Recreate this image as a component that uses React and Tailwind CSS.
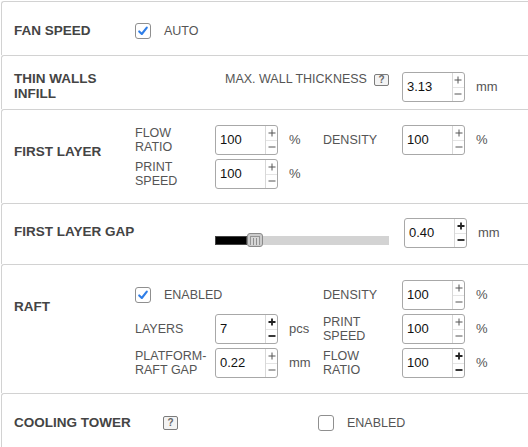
import React from "react";

function Spin({ bold }) {
  const c = bold ? "#222" : "#555";
  const w = bold ? 1.8 : 1;
  return (
    <div className="flex w-[12px] flex-col border-l border-[#d8d8d8]">
      <div className="flex flex-1 items-center justify-center border-b border-[#e4e4e4]">
        <svg width="8" height="8" viewBox="0 0 8 8">
          <path d="M4 0.5V7.5M0.5 4H7.5" stroke={c} strokeWidth={w} />
        </svg>
      </div>
      <div className="flex flex-1 items-center justify-center">
        <svg width="8" height="8" viewBox="0 0 8 8">
          <path d="M0.5 4H7.5" stroke={c} strokeWidth={w} />
        </svg>
      </div>
    </div>
  );
}

function Num({ v, bold }) {
  return (
    <div className="flex h-[30px] w-[63px] shrink-0 rounded-[3px] border border-[#a8a8a8] bg-white">
      <div className="flex flex-1 items-center pl-[4px] text-[13px] text-[#111]">{v}</div>
      <Spin bold={bold} />
    </div>
  );
}

function Check({ on }) {
  return (
    <div className="flex h-[16px] w-[16px] shrink-0 items-center justify-center rounded-[3px] border border-[#8f8f8f] bg-white">
      {on && (
        <svg width="12" height="12" viewBox="0 0 12 12">
          <path d="M2.2 6.4L4.8 9L9.8 2.6" fill="none" stroke="#2f7ee8" strokeWidth="2.1" strokeLinecap="round" strokeLinejoin="round" />
        </svg>
      )}
    </div>
  );
}

function Help({ h }) {
  return (
    <div className={`flex w-[15px] shrink-0 items-center justify-center rounded-[2px] border border-[#7c7c7c] bg-[#f3f3f3] text-[10px] font-bold leading-none text-[#666] ${h}`}>
      ?
    </div>
  );
}

function Label({ children }) {
  return <div className="text-[12.5px] leading-[14px] text-[#555]">{children}</div>;
}

function Unit({ children }) {
  return <div className="pl-[11px] text-[13px] text-[#555]">{children}</div>;
}

function Row({ h, children }) {
  return (
    <div className={`flex rounded-tl-[3px] border-l border-t border-[#d2d2d2] ${h}`}>{children}</div>
  );
}

function Title({ pt, children }) {
  return (
    <div className={`w-[133px] shrink-0 pl-[12px] text-[13.5px] font-bold leading-[15px] text-[#444] ${pt}`}>
      {children}
    </div>
  );
}

export default function App() {
  return (
    <div className="min-h-[447px] bg-white pl-[1px] pt-[1px] font-['Liberation_Sans',Arial,sans-serif]">
      <Row h="h-[54px]">
        <Title pt="pt-[21px]">FAN SPEED</Title>
        <div className="mt-[21px] flex h-[16px] items-center">
          <Check on />
          <div className="ml-[13px] text-[12.5px] text-[#555]">AUTO</div>
        </div>
      </Row>

      <Row h="h-[54px]">
        <Title pt="pt-[14.5px]">
          THIN WALLS
          <br />
          INFILL
        </Title>
        <div className="flex items-start self-start pt-[16px]">
          <div className="ml-[90px] text-[12.5px] leading-[15px] text-[#555]">MAX. WALL THICKNESS</div>
          <Help h="ml-[7px] mt-[2px] h-[12px]" />
          <div className="ml-[13px] flex items-center">
            <Num v="3.13" />
            <Unit>mm</Unit>
          </div>
        </div>
      </Row>

      <Row h="h-[94px]">
        <Title pt="pt-[33.5px]">FIRST LAYER</Title>
        <div className="grid grid-cols-[80px_63px_45px_79px_63px_auto] content-start items-center gap-y-[4px] self-start pt-[15px]">
          <Label>
            FLOW
            <br />
            RATIO
          </Label>
          <Num v="100" />
          <Unit>%</Unit>
          <Label>DENSITY</Label>
          <Num v="100" />
          <Unit>%</Unit>
          <Label>
            PRINT
            <br />
            SPEED
          </Label>
          <Num v="100" />
          <Unit>%</Unit>
        </div>
      </Row>

      <Row h="h-[61px]">
        <Title pt="pt-[20px]">FIRST LAYER GAP</Title>
        <div className="flex items-start self-start">
          <div className="ml-[80px] mt-[29px] flex h-[14px] w-[174px] items-center">
            <div className="h-[9px] w-[32px] border border-[#444] bg-black" />
            <div className="flex h-[14px] w-[16px] shrink-0 items-end justify-center rounded-[3px] border border-[#8a8a8a] bg-[#cbcbcb] pb-[1px]">
              <div className="flex h-[9px] w-[10px] justify-center gap-[2px] border-x border-t border-[#959595] bg-[#d6d6d6] pt-[1px]">
                <div className="w-[1px] bg-[#8f8f8f]" />
                <div className="w-[1px] bg-[#8f8f8f]" />
              </div>
            </div>
            <div className="h-[9px] flex-1 bg-[#d3d3d3]" />
          </div>
          <div className="ml-[15px] mt-[14px] flex items-center">
            <Num v="0.40" bold />
            <Unit>mm</Unit>
          </div>
        </div>
      </Row>

      <Row h="h-[129px]">
        <Title pt="pt-[33.5px]">RAFT</Title>
        <div className="grid grid-cols-[80px_63px_45px_79px_63px_auto] content-start items-center gap-y-[4px] self-start pt-[15px]">
          <div className="col-span-3 flex items-center">
            <Check on />
            <div className="ml-[13px] text-[12.5px] text-[#555]">ENABLED</div>
          </div>
          <Label>DENSITY</Label>
          <Num v="100" />
          <Unit>%</Unit>

          <Label>LAYERS</Label>
          <Num v="7" bold />
          <Unit>pcs</Unit>
          <Label>
            PRINT
            <br />
            SPEED
          </Label>
          <Num v="100" />
          <Unit>%</Unit>

          <Label>
            PLATFORM-
            <br />
            RAFT GAP
          </Label>
          <Num v="0.22" />
          <Unit>mm</Unit>
          <Label>
            FLOW
            <br />
            RATIO
          </Label>
          <Num v="100" bold />
          <Unit>%</Unit>
        </div>
      </Row>

      <Row h="min-h-[60px]">
        <Title pt="pt-[21px]">COOLING TOWER</Title>
        <div className="mt-[21px] flex h-[16px] items-center">
          <Help h="ml-[28px] h-[14px]" />
          <div className="ml-[140px]">
            <Check />
          </div>
          <div className="ml-[13px] text-[12.5px] text-[#555]">ENABLED</div>
        </div>
      </Row>
    </div>
  );
}
